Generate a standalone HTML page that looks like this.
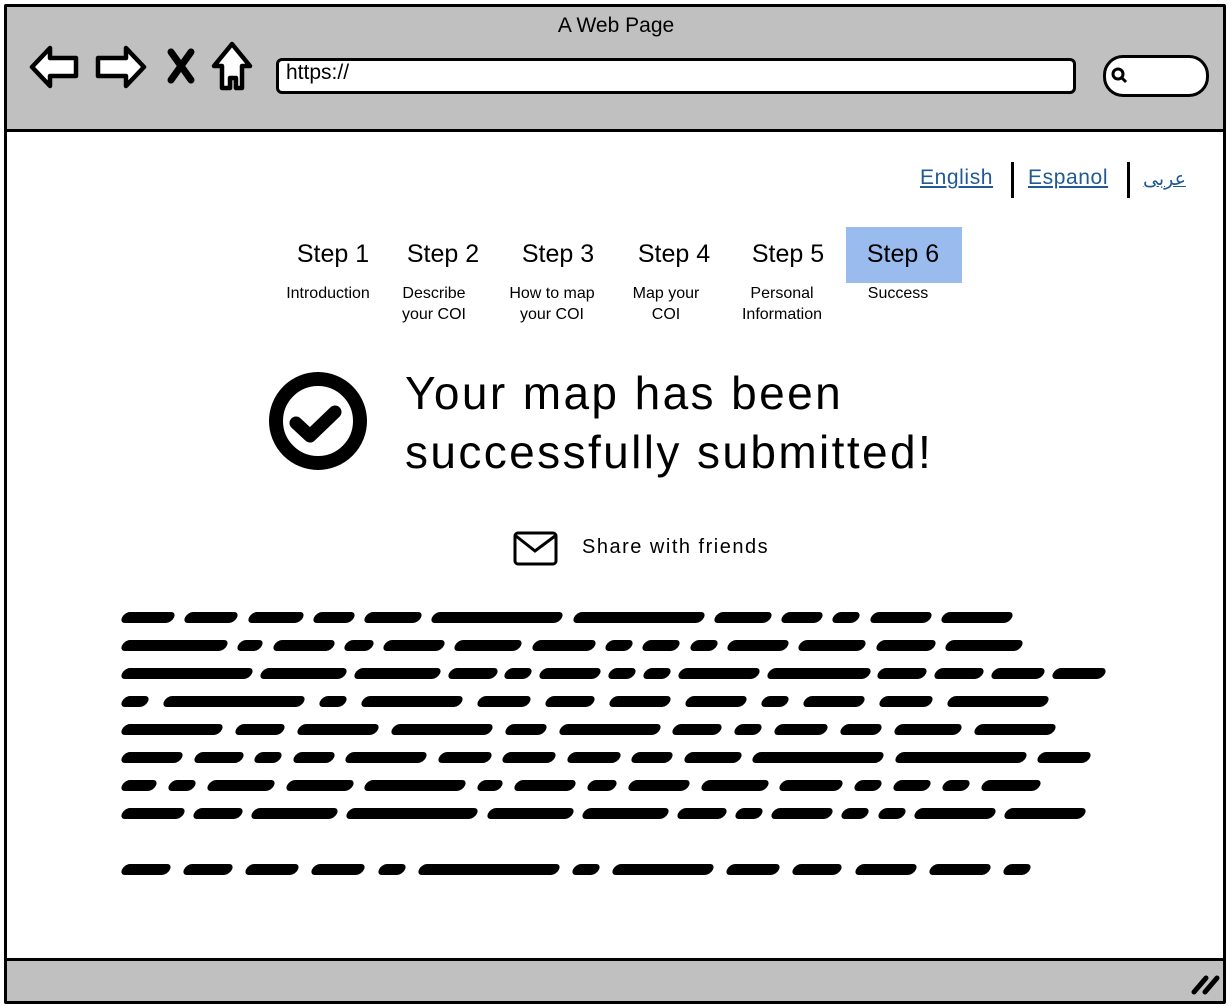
<!DOCTYPE html>
<html><head><meta charset="utf-8"><style>
body{margin:0;width:1232px;height:1006px;position:relative;background:#fff;font-family:"Liberation Sans","DejaVu Sans",sans-serif;overflow:hidden}
.a{position:absolute}
.frame{left:4px;top:4px;width:1216px;height:994px;border:3px solid #000;border-radius:2px}
.top{left:7px;top:7px;width:1216px;height:122px;background:#c0c0c0;border-bottom:3px solid #000}
.bot{left:7px;top:958px;width:1216px;height:40px;background:#c0c0c0;border-top:3px solid #000}
.lang{color:#1f5a96;text-decoration:underline;font-size:21px;top:166px;letter-spacing:0.6px}
.sep{width:3px;height:36px;background:#000;top:162px}
.st{font-size:25px;top:240px;width:120px;text-align:center}
.sub{font-size:16px;top:283px;width:120px;text-align:center;line-height:21px}
.ln{position:absolute;left:122px;display:flex;justify-content:space-between;height:11px}
.ln i{display:block;height:11px;background:#000;border-radius:6px;transform:skewX(-25deg)}
</style></head><body>
<div class="a top"></div>
<div class="a bot"></div>
<div class="a frame"></div>
<div class="a" style="left:0;width:1232px;top:14px;text-align:center;font-size:21px">A Web Page</div>
<svg class="a" style="left:28px;top:40px" width="230" height="56" viewBox="0 0 230 56">
<path d="M4 27 L22 8 L22 18 L48 18 L48 36 L22 36 L22 46 Z" fill="#fff" stroke="#000" stroke-width="4.5" stroke-linejoin="round"/>
<path d="M116 27 L98 8 L98 18 L70 18 L70 36 L98 36 L98 46 Z" fill="#fff" stroke="#000" stroke-width="4.5" stroke-linejoin="round"/>
<path d="M143 12 L163 40 M163 12 L143 40" stroke="#000" stroke-width="7" stroke-linecap="round"/>
<path d="M204 4 L186 26 L194 26 L194 48 L202 48 L202 38 L208 38 L208 48 L214 48 L214 26 L222 26 Z" fill="#fff" stroke="#000" stroke-width="4.5" stroke-linejoin="round"/>
</svg>
<div class="a" style="left:276px;top:58px;width:794px;height:30px;border:3px solid #000;border-radius:6px;background:#fff"></div>
<div class="a" style="left:286px;top:61px;font-size:21px">https://</div>
<div class="a" style="left:1103px;top:55px;width:100px;height:36px;border:3px solid #000;border-radius:20px;background:#fff"></div>
<svg class="a" style="left:1110px;top:66px" width="20" height="20"><circle cx="8" cy="8" r="5" fill="none" stroke="#000" stroke-width="3"/><path d="M11 11 L16 16" stroke="#000" stroke-width="3"/></svg>
<svg class="a" style="left:1190px;top:968px" width="36" height="30"><path d="M4 24 L16 10 M15 24 L27 10" stroke="#000" stroke-width="5" stroke-linecap="round"/></svg>

<div class="a lang" style="left:920px">English</div>
<div class="a sep" style="left:1011px"></div>
<div class="a lang" style="left:1028px">Espanol</div>
<div class="a sep" style="left:1127px"></div>
<div class="a lang" style="left:1143px;font-family:'DejaVu Sans',sans-serif;font-size:19px;top:168px">عربى</div>

<div class="a" style="left:846px;top:227px;width:116px;height:56px;background:#99bbee"></div>
<div class="a st" style="left:273px">Step 1</div>
<div class="a st" style="left:383px">Step 2</div>
<div class="a st" style="left:498px">Step 3</div>
<div class="a st" style="left:614px">Step 4</div>
<div class="a st" style="left:728px">Step 5</div>
<div class="a st" style="left:843px">Step 6</div>
<div class="a sub" style="left:268px">Introduction</div>
<div class="a sub" style="left:374px">Describe<br>your COI</div>
<div class="a sub" style="left:492px">How to map<br>your COI</div>
<div class="a sub" style="left:606px">Map your<br>COI</div>
<div class="a sub" style="left:722px">Personal<br>Information</div>
<div class="a sub" style="left:838px">Success</div>

<svg class="a" style="left:268px;top:372px" width="100" height="100"><circle cx="50" cy="49" r="42" fill="none" stroke="#000" stroke-width="14"/><path d="M28 51 L42 64 L67 40" fill="none" stroke="#000" stroke-width="13" stroke-linejoin="round" stroke-linecap="round"/></svg>
<div class="a" style="left:405px;top:364px;font-size:46px;line-height:59px;letter-spacing:2.4px">Your map has been<br>successfully submitted!</div>

<svg class="a" style="left:513px;top:531px" width="46" height="36"><rect x="2" y="2" width="41" height="31" rx="3" fill="none" stroke="#000" stroke-width="3"/><path d="M3 5 L22 20 L42 5" fill="none" stroke="#000" stroke-width="3"/></svg>
<div class="a" style="left:582px;top:536px;font-size:20px;letter-spacing:1.5px">Share with friends</div>

<div class="ln" style="top:612px;width:890px"><i style="width:52px"></i><i style="width:52px"></i><i style="width:54px"></i><i style="width:40px"></i><i style="width:56px"></i><i style="width:130px"></i><i style="width:130px"></i><i style="width:56px"></i><i style="width:40px"></i><i style="width:26px"></i><i style="width:60px"></i><i style="width:70px"></i></div>
<div class="ln" style="top:640px;width:900px"><i style="width:105px"></i><i style="width:24px"></i><i style="width:60px"></i><i style="width:28px"></i><i style="width:60px"></i><i style="width:66px"></i><i style="width:62px"></i><i style="width:26px"></i><i style="width:36px"></i><i style="width:26px"></i><i style="width:60px"></i><i style="width:66px"></i><i style="width:58px"></i><i style="width:76px"></i></div>
<div class="ln" style="top:668px;width:983px"><i style="width:130px"></i><i style="width:85px"></i><i style="width:85px"></i><i style="width:48px"></i><i style="width:26px"></i><i style="width:60px"></i><i style="width:26px"></i><i style="width:26px"></i><i style="width:80px"></i><i style="width:102px"></i><i style="width:48px"></i><i style="width:48px"></i><i style="width:52px"></i><i style="width:52px"></i></div>
<div class="ln" style="top:696px;width:926px"><i style="width:26px"></i><i style="width:140px"></i><i style="width:26px"></i><i style="width:100px"></i><i style="width:52px"></i><i style="width:48px"></i><i style="width:60px"></i><i style="width:60px"></i><i style="width:26px"></i><i style="width:60px"></i><i style="width:52px"></i><i style="width:100px"></i></div>
<div class="ln" style="top:724px;width:933px"><i style="width:100px"></i><i style="width:48px"></i><i style="width:80px"></i><i style="width:100px"></i><i style="width:40px"></i><i style="width:100px"></i><i style="width:48px"></i><i style="width:26px"></i><i style="width:52px"></i><i style="width:40px"></i><i style="width:66px"></i><i style="width:80px"></i></div>
<div class="ln" style="top:752px;width:968px"><i style="width:60px"></i><i style="width:48px"></i><i style="width:26px"></i><i style="width:40px"></i><i style="width:80px"></i><i style="width:52px"></i><i style="width:52px"></i><i style="width:52px"></i><i style="width:40px"></i><i style="width:56px"></i><i style="width:130px"></i><i style="width:130px"></i><i style="width:52px"></i></div>
<div class="ln" style="top:780px;width:918px"><i style="width:34px"></i><i style="width:26px"></i><i style="width:66px"></i><i style="width:66px"></i><i style="width:100px"></i><i style="width:24px"></i><i style="width:60px"></i><i style="width:28px"></i><i style="width:60px"></i><i style="width:66px"></i><i style="width:62px"></i><i style="width:26px"></i><i style="width:36px"></i><i style="width:26px"></i><i style="width:58px"></i></div>
<div class="ln" style="top:808px;width:963px"><i style="width:62px"></i><i style="width:48px"></i><i style="width:85px"></i><i style="width:130px"></i><i style="width:85px"></i><i style="width:85px"></i><i style="width:48px"></i><i style="width:26px"></i><i style="width:60px"></i><i style="width:26px"></i><i style="width:26px"></i><i style="width:80px"></i><i style="width:80px"></i></div>
<div class="ln" style="top:864px;width:908px"><i style="width:48px"></i><i style="width:48px"></i><i style="width:52px"></i><i style="width:52px"></i><i style="width:26px"></i><i style="width:140px"></i><i style="width:26px"></i><i style="width:100px"></i><i style="width:52px"></i><i style="width:48px"></i><i style="width:60px"></i><i style="width:60px"></i><i style="width:26px"></i></div>
</body></html>
